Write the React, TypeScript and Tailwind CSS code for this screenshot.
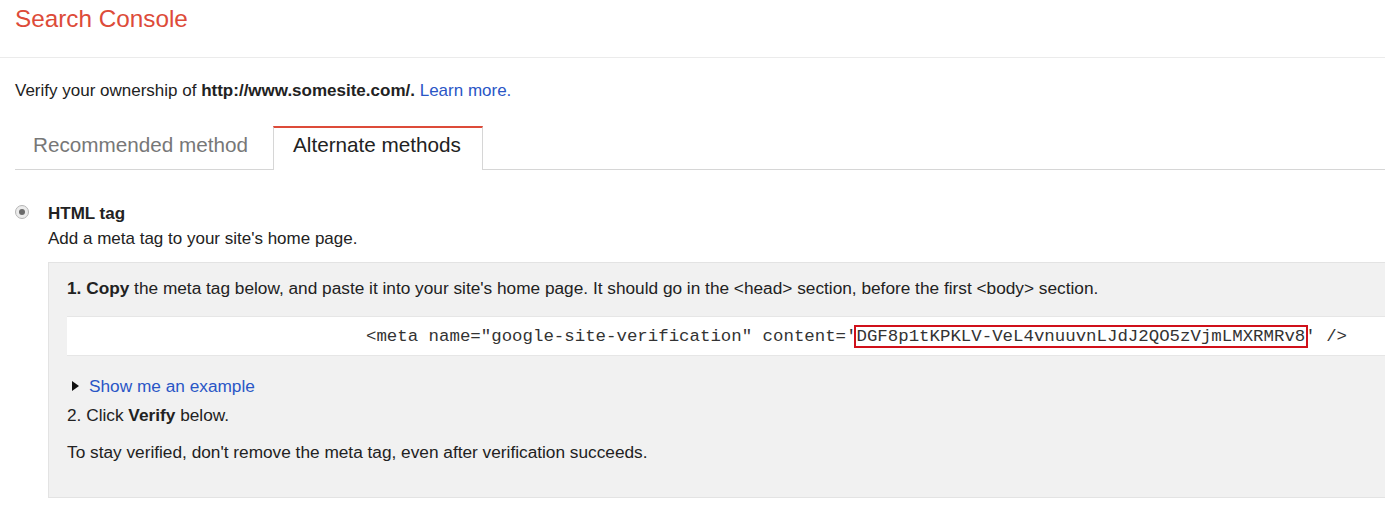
import React from 'react'

const token = 'DGF8p1tKPKLV-VeL4vnuuvnLJdJ2QO5zVjmLMXRMRv8'

function Radio() {
  return (
    <span className="mt-[4px] flex h-[14px] w-[14px] shrink-0 items-center justify-center rounded-full border border-[#b5b5b5] bg-[#ececec]">
      <span className="h-[6px] w-[6px] rounded-full bg-[#6b6b6b]" />
    </span>
  )
}

export default function App() {
  return (
    <div className="h-[517px] w-[1385px] overflow-hidden bg-white font-['Liberation_Sans',Arial,sans-serif] text-[#222]">
      {/* Header */}
      <header className="h-[58px] border-b border-[#ebebeb] px-[15px] pt-[3px]">
        <h1 className="text-[24.3px] leading-[32px] text-[#dd4b39]">Search Console</h1>
      </header>

      <main className="pl-[15px]">
        <p className="mt-[23px] text-[17px] leading-[20px]">
          Verify your ownership of <b>http://www.somesite.com/.</b>{' '}
          <a className="text-[#2a56c6]">Learn more.</a>
        </p>

        {/* Tabs */}
        <div className="mt-[25px] flex h-[44px] border-b border-[#d6d6d6] text-[20.7px] leading-[24px]">
          <div className="w-[258px] pl-[18px] pt-[7px] text-[#777]">Recommended method</div>
          <div className="-mb-px w-[210px] border-x border-t-2 border-x-[#d6d6d6] border-t-[#dd4b39] bg-white px-[19px] pt-[5px] text-[#222]">
            Alternate methods
          </div>
        </div>

        {/* HTML tag option */}
        <div className="mt-[31px] flex gap-[19px]">
          <Radio />
          <div className="text-[17px] leading-[25px]">
            <div className="font-bold">HTML tag</div>
            <div>Add a meta tag to your site's home page.</div>
          </div>
        </div>

        <div className="ml-[33px] mt-[11px] w-[1400px] border border-[#e3e3e3] bg-[#f1f1f1] pb-[35px] pl-[18px] pt-[15px] text-[17.25px] leading-[20px]">
          <p>
            <b>1. Copy</b> the meta tag below, and paste it into your site's home page. It should go
            in the &lt;head&gt; section, before the first &lt;body&gt; section.
          </p>

          <div className="mt-[18px] h-[40px] border-y border-[#e6e6e6] bg-white pl-[299px] pt-[2px] font-['Liberation_Mono','Courier_New',monospace] text-[17.4px] leading-[35px] text-[#333]">
            &lt;meta name="google-site-verification" content='
            <span className="-mx-[3px] border-2 border-[#d0101a] px-[1px]">{token}</span>' /&gt;
          </div>

          <div className="mt-[20px] flex items-center gap-[10px] pl-[5px]">
            <svg width="7" height="10" viewBox="0 0 7 10">
              <path d="M0 0 L7 5 L0 10 Z" fill="#111" />
            </svg>
            <a className="text-[#2a56c6]">Show me an example</a>
          </div>
          <p className="mt-[9px]">
            2. Click <b>Verify</b> below.
          </p>
          <p className="mt-[17px]">
            To stay verified, don't remove the meta tag, even after verification succeeds.
          </p>
        </div>
      </main>
    </div>
  )
}
